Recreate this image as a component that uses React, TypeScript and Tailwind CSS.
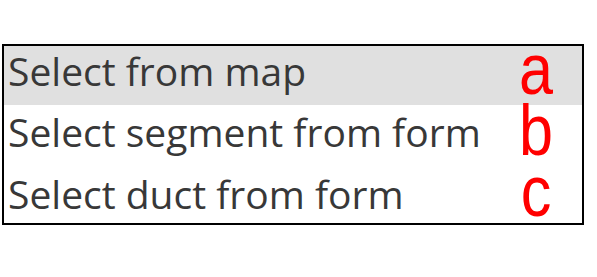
const rows = [
  { label: "Select from map", active: true, pad: "pt-[5px]" },
  { label: "Select segment from form", active: false, pad: "pt-[7px]" },
  { label: "Select duct from form", active: false, pad: "pt-[10px]" },
];

const marks = ["a", "b", "c"];

export default function App() {
  return (
    <div className="w-[597px] h-[277px] bg-white pt-[44px] pl-[2px]">
      <div className="relative w-[582px] border-2 border-black">
        {rows.map((row) => (
          <div
            key={row.label}
            className={
              "h-[59px] " + row.pad + " " + (row.active ? "bg-[#e0e0e0]" : "bg-white")
            }
          >
            <span className="block pl-[4px] text-[39px] leading-none text-[#383838] font-['Open_Sans',sans-serif]">
              {row.label}
            </span>
          </div>
        ))}

        {/* red annotation letters */}
        <div className="absolute top-[-7px] right-[26px] w-[40px] flex flex-col">
          {marks.map((m) => (
            <span
              key={m}
              className="block text-center text-[72px] leading-[61px] text-[#ff0000] font-['Liberation_Sans',Arial,sans-serif] scale-x-[0.85]"
            >
              {m}
            </span>
          ))}
        </div>
      </div>
    </div>
  );
}
